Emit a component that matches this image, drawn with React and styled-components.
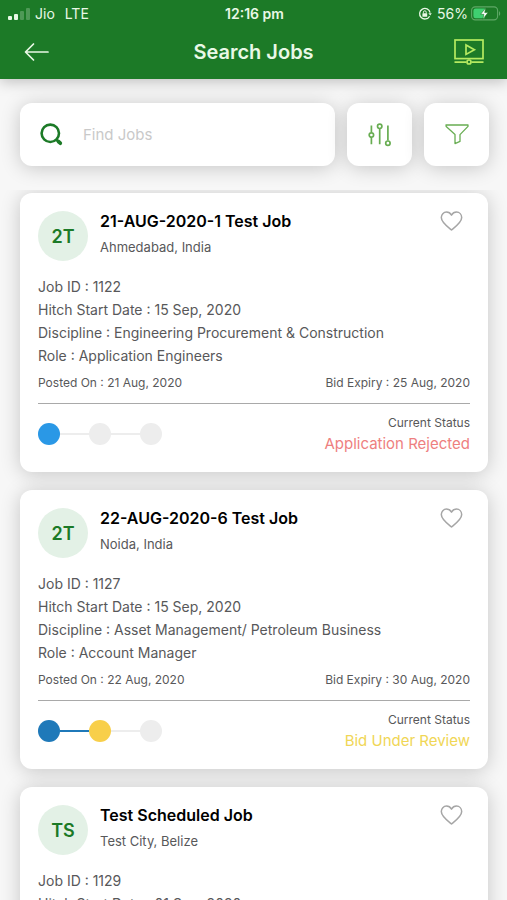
import React, { useState } from 'react';
import styled, { createGlobalStyle } from 'styled-components';

const COLORS = {
  green: '#1c7a27',
  lightGreen: '#e3f1e6',
  lime: '#b5ea61',
  page: '#f7f7f7',
  text: '#58585a',
  line: '#a9a9a9',
  idle: '#ededed',
};

const SHADOW = '0 2px 20px rgba(0, 0, 0, 0.2)';

const GlobalStyle = createGlobalStyle`
  * {
    box-sizing: border-box;
  }

  body {
    margin: 0;
    background: ${COLORS.page};
    font-family: Inter, 'Liberation Sans', sans-serif;
    color: ${COLORS.text};
  }

  button {
    font: inherit;
    border: none;
    background: none;
    padding: 0;
    cursor: pointer;
  }

  svg {
    display: block;
  }
`;

const Screen = styled.div`
  display: flex;
  flex-direction: column;
  height: 100vh;
  overflow: hidden;
`;

// Header
const Header = styled.header`
  background: ${COLORS.green};
  color: #e9f8e6;
  box-shadow: 0 2px 14px rgba(0, 0, 0, 0.25);
  z-index: 2;
`;

const StatusBar = styled.div`
  display: grid;
  grid-template-columns: 1fr auto 1fr;
  align-items: center;
  height: 27px;
  padding: 0 6px 0 8px;
  font-size: 14px;
`;

const StatusGroup = styled.div`
  display: flex;
  align-items: center;
  justify-content: ${({ $end }) => ($end ? 'flex-end' : 'flex-start')};
  gap: 5px;
`;

const Network = styled.span`
  margin-left: 5px;
`;

const Clock = styled.span`
  font-weight: 600;
`;

const Battery = styled.span`
  display: flex;
  align-items: center;
  gap: 3px;
`;

const NavBar = styled.div`
  display: grid;
  grid-template-columns: 1fr auto 1fr;
  align-items: center;
  height: 52px;
  padding: 0 23px 3px;
`;

const Title = styled.h1`
  margin: 0;
  font-size: 20px;
  font-weight: 600;
`;

const NavButton = styled.button`
  justify-self: ${({ $end }) => ($end ? 'end' : 'start')};
`;

// Search row
const SearchRow = styled.form`
  display: flex;
  gap: 12px;
  padding: 24px 18px 24px 20px;
`;

const SearchBox = styled.label`
  flex: 1;
  display: flex;
  align-items: center;
  gap: 20px;
  min-width: 0;
  height: 63px;
  padding: 0 20px;
  border-radius: 12px;
  background: #fff;
  box-shadow: ${SHADOW};
`;

const SearchInput = styled.input`
  flex: 1;
  min-width: 0;
  border: none;
  outline: none;
  background: none;
  padding: 0;
  font: inherit;
  font-size: 15px;

  &::placeholder {
    color: #c9c9c9;
  }
`;

const SquareButton = styled.button`
  display: flex;
  align-items: center;
  justify-content: center;
  width: 65px;
  height: 63px;
  border-radius: 12px;
  background: #fff;
  box-shadow: ${SHADOW};
`;

// Job list
const JobList = styled.main`
  flex: 1;
  min-height: 0;
  display: flex;
  flex-direction: column;
  gap: 18px;
  padding: 3px 19px 20px 20px;
  overflow-y: auto;
  scrollbar-width: none;
`;

const Card = styled.article`
  flex: none;
  padding: 18px 18px 17px;
  border-radius: 12px;
  background: #fff;
  box-shadow: ${SHADOW};
`;

const CardHead = styled.div`
  display: flex;
  align-items: flex-start;
  gap: 12px;
`;

const Avatar = styled.div`
  display: flex;
  align-items: center;
  justify-content: center;
  width: 50px;
  height: 50px;
  border-radius: 50%;
  background: ${COLORS.lightGreen};
  color: ${COLORS.green};
  font-size: 18px;
  font-weight: 600;
`;

const Heading = styled.div`
  flex: 1;
  min-width: 0;
`;

const JobTitle = styled.h2`
  margin: 0;
  font-size: 16px;
  font-weight: 600;
  line-height: 21px;
  color: #000;
`;

const Location = styled.p`
  margin: 5px 0 0;
  font-size: 13px;
  line-height: 20px;
`;

const LikeButton = styled.button`
  margin-right: 7px;
`;

const Details = styled.div`
  margin-top: 14px;
  font-size: 14px;
  line-height: 23px;
`;

const Dates = styled.div`
  display: flex;
  justify-content: space-between;
  margin-top: 6px;
  padding-bottom: 10px;
  border-bottom: 1px solid ${COLORS.line};
  font-size: 12px;
  line-height: 20px;
`;

const CardFoot = styled.div`
  display: flex;
  align-items: center;
  justify-content: space-between;
  margin-top: 9px;
`;

const Steps = styled.div`
  display: flex;
  align-items: center;
`;

const Dot = styled.span`
  width: 22px;
  height: 22px;
  border-radius: 50%;
  background: ${({ $color }) => $color};
`;

const Connector = styled.span`
  width: 29px;
  height: 2px;
  background: ${({ $color }) => $color};
`;

const Status = styled.div`
  text-align: right;
  font-size: 12px;
  line-height: 20px;
`;

const StatusValue = styled.div`
  font-size: 15px;
  line-height: 22px;
  color: ${({ $color }) => $color};
`;

const jobs = [
  {
    initials: '2T',
    title: '21-AUG-2020-1 Test Job',
    location: 'Ahmedabad, India',
    id: '1122',
    start: '15 Sep, 2020',
    discipline: 'Engineering Procurement & Construction',
    role: 'Application Engineers',
    posted: '21 Aug, 2020',
    expiry: '25 Aug, 2020',
    status: 'Application Rejected',
    statusColor: '#ee7f80',
    steps: ['#2a98e6', COLORS.idle, COLORS.idle],
  },
  {
    initials: '2T',
    title: '22-AUG-2020-6 Test Job',
    location: 'Noida, India',
    id: '1127',
    start: '15 Sep, 2020',
    discipline: 'Asset Management/ Petroleum Business',
    role: 'Account Manager',
    posted: '22 Aug, 2020',
    expiry: '30 Aug, 2020',
    status: 'Bid Under Review',
    statusColor: '#f0d656',
    steps: ['#1f79b9', '#f8cf4a', COLORS.idle],
  },
  {
    initials: 'TS',
    title: 'Test Scheduled Job',
    location: 'Test City, Belize',
    id: '1129',
    start: '01 Sep, 2020',
    discipline: 'Engineering Procurement & Construction',
    role: 'Project Manager',
    posted: '24 Aug, 2020',
    expiry: '31 Aug, 2020',
    status: 'Bid Under Review',
    statusColor: '#f0d656',
    steps: ['#1f79b9', '#f8cf4a', COLORS.idle],
  },
];

// Icons
const SignalIcon = () => (
  <svg width="22" height="14" viewBox="0 0 22 14" fill="#e9f8e6">
    <rect x="0" y="9" width="4" height="4" rx="1" />
    <rect x="6" y="7" width="4" height="6" rx="1" />
    <rect x="12" y="4" width="4" height="9" rx="1" opacity="0.25" />
    <rect x="18" y="1" width="4" height="12" rx="1" opacity="0.25" />
  </svg>
);

const RotationLockIcon = () => (
  <svg width="14" height="14" viewBox="0 0 14 14" fill="none" stroke="#e9f8e6" strokeWidth="1.3">
    <path d="M11.6 9.2A5.3 5.3 0 1 1 12.1 5.6" />
    <path d="M10.4 6.2h3.4L12.2 8.6z" fill="#e9f8e6" stroke="none" />
    <rect x="4.4" y="6.2" width="4.8" height="3.6" rx="0.6" fill="#e9f8e6" stroke="none" />
    <path d="M5.4 6.4V5.2a1.4 1.4 0 0 1 2.8 0v1.2" strokeWidth="1" />
  </svg>
);

const BatteryIcon = () => (
  <svg width="30" height="15" viewBox="0 0 30 15" fill="none">
    <rect x="0.6" y="0.9" width="26" height="13" rx="3.6" stroke="#5fa867" strokeWidth="1.1" />
    <path d="M4.6 2.6H14V12.2H4.6a2.2 2.2 0 0 1-2.2-2.2V4.8a2.2 2.2 0 0 1 2.2-2.2z" fill="#3fd070" />
    <path d="M28 5.2c1.6.6 1.6 4 0 4.6z" fill="#5fa867" />
    <path d="M14.8 1.8L9.6 8.3h3.3l-1.1 4.9 5.3-6.6h-3.4z" fill="#fff" stroke={COLORS.green} strokeWidth="0.6" />
  </svg>
);

const BackIcon = () => (
  <svg width="26" height="20" viewBox="0 0 26 20" fill="none" stroke="#e9f8e6" strokeWidth="1.7" strokeLinecap="round" strokeLinejoin="round">
    <path d="M25 10H3M10.5 2L2.5 10l8 8" />
  </svg>
);

const VideoIcon = () => (
  <svg width="30" height="26" viewBox="0 0 30 26" fill="none" stroke={COLORS.lime} strokeWidth="1.7">
    <rect x="1" y="1" width="28" height="18.6" />
    <path d="M12 6v9.4l8.4-4.7z" />
    <path d="M0.5 23.2h12M17.5 23.2h12" />
    <circle cx="15" cy="23" r="2" />
  </svg>
);

const SearchIcon = () => (
  <svg width="23" height="23" viewBox="0 0 23 23" fill="none" stroke={COLORS.green} strokeLinecap="round">
    <circle cx="10.3" cy="10.3" r="8.7" strokeWidth="2.6" />
    <path d="M17 17.2l1 .9" strokeWidth="2.6" />
    <path d="M18.4 18.5l1.9 1.7" strokeWidth="3.7" />
  </svg>
);

const SlidersIcon = () => (
  <svg width="24" height="24" viewBox="0 0 24 24" fill="none" stroke="#68ad52" strokeWidth="1.7">
    <path d="M3.400 2.600v7M3.400 14.400v6.800M11.700 5.800v15.400M19.900 2.600v15" />
    <circle cx="3.4" cy="12" r="2.2" />
    <circle cx="11.7" cy="3.3" r="2.2" />
    <circle cx="19.9" cy="20.2" r="2.2" />
  </svg>
);

const FunnelIcon = () => (
  <svg width="24" height="22" viewBox="0 0 24 22" fill="none" stroke="#68ad52" strokeWidth="1.3" strokeLinejoin="round">
    <path d="M1 1h22v1.400l-8 8.200v6.800l-5 2.200v-9L1.200 2.600z" />
  </svg>
);

const HeartIcon = () => (
  <svg width="23" height="20" viewBox="0 0 23 20" fill="none" stroke="#a6a6a6" strokeWidth="1.5" strokeLinejoin="round">
    <path d="M11.5 19C8 16.2 1.3 11.5 1.3 6.6 1.3 3.4 3.6 1.1 6.5 1.1c2.2 0 3.9 1.1 5 3 1.1-1.9 2.8-3 5-3 2.9 0 5.2 2.3 5.2 5.5C21.7 11.5 15 16.2 11.500 19z" />
  </svg>
);

const JobCard = ({ job }) => {
  const [first, second, third] = job.steps;

  return (
    <Card>
      <CardHead>
        <Avatar>{job.initials}</Avatar>
        <Heading>
          <JobTitle>{job.title}</JobTitle>
          <Location>{job.location}</Location>
        </Heading>
        <LikeButton type="button" aria-label="Save job">
          <HeartIcon />
        </LikeButton>
      </CardHead>
      <Details>
        <div>Job ID : {job.id}</div>
        <div>Hitch Start Date : {job.start}</div>
        <div>Discipline : {job.discipline}</div>
        <div>Role : {job.role}</div>
      </Details>
      <Dates>
        <span>Posted On : {job.posted}</span>
        <span>Bid Expiry : {job.expiry}</span>
      </Dates>
      <CardFoot>
        <Steps>
          <Dot $color={first} />
          <Connector $color={second === COLORS.idle ? COLORS.idle : first} />
          <Dot $color={second} />
          <Connector $color={third} />
          <Dot $color={third} />
        </Steps>
        <Status>
          Current Status
          <StatusValue $color={job.statusColor}>{job.status}</StatusValue>
        </Status>
      </CardFoot>
    </Card>
  );
};

const App = () => {
  const [query, setQuery] = useState('');

  return (
    <Screen>
      <GlobalStyle />
      <Header>
        <StatusBar>
          <StatusGroup>
            <SignalIcon />
            <span>Jio</span>
            <Network>LTE</Network>
          </StatusGroup>
          <Clock>12:16 pm</Clock>
          <StatusGroup $end>
            <RotationLockIcon />
            <Battery>
              56%
              <BatteryIcon />
            </Battery>
          </StatusGroup>
        </StatusBar>
        <NavBar>
          <NavButton type="button" aria-label="Back">
            <BackIcon />
          </NavButton>
          <Title>Search Jobs</Title>
          <NavButton $end type="button" aria-label="Videos">
            <VideoIcon />
          </NavButton>
        </NavBar>
      </Header>
      <SearchRow onSubmit={(e) => e.preventDefault()}>
        <SearchBox>
          <SearchIcon />
          <SearchInput
            aria-label="Find Jobs"
            placeholder="Find Jobs"
            value={query}
            onChange={(e) => setQuery(e.target.value)}
          />
        </SearchBox>
        <SquareButton type="button" aria-label="Sort">
          <SlidersIcon />
        </SquareButton>
        <SquareButton type="button" aria-label="Filter">
          <FunnelIcon />
        </SquareButton>
      </SearchRow>
      <JobList>
        {jobs.map((job) => (
          <JobCard key={job.title} job={job} />
        ))}
      </JobList>
    </Screen>
  );
};

export default App;
